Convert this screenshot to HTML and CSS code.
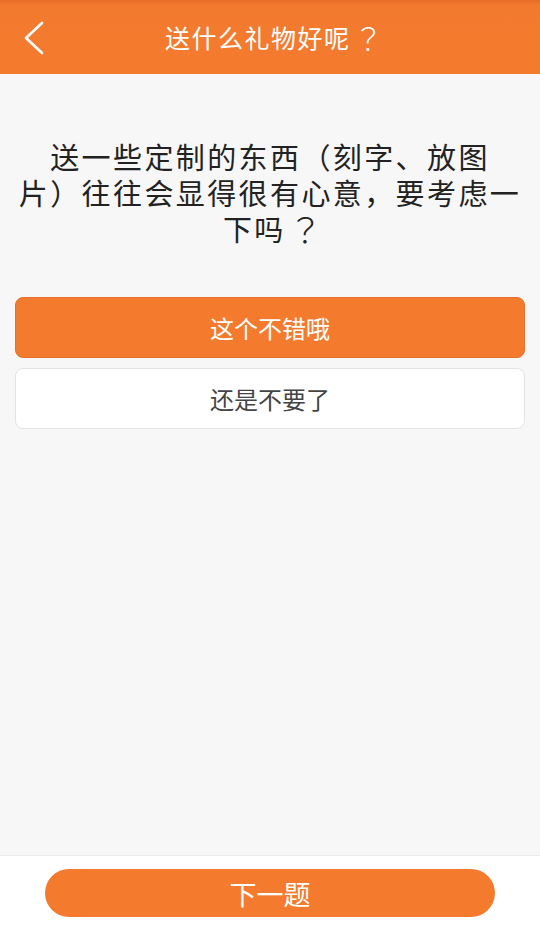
FILE: index.html
```html
<!DOCTYPE html>
<html lang="zh-CN">
<head>
<meta charset="utf-8">
<link rel="stylesheet" href="styles.css">
</head>
<body>
<div class="app">
  <header class="topbar">
    <span class="back">
      <svg width="22" height="34" viewBox="0 0 22 34"><path d="M19 2 L3 17 L19 32" fill="none" stroke="#fff" stroke-width="2.6" stroke-linecap="round" stroke-linejoin="round"/></svg>
    </span>
    <h1 class="title">送什么礼物好呢<span class="punct q">？</span></h1>
  </header>
  <main class="content">
    <p class="question">送一些定制的东西（刻字、放图<br>片<span class="punct">）</span>往往会显得很有心意<span class="punct">，</span>要考虑一<br>下吗<span class="punct q">？</span></p>
    <div class="options">
      <button class="opt opt-yes">这个不错哦</button>
      <button class="opt opt-no">还是不要了</button>
    </div>
  </main>
  <footer class="bottombar">
    <button class="next">下一题</button>
  </footer>
</div>
</body>
</html>
```
FILE: styles.css
```css
* { box-sizing: border-box; }
html, body { margin: 0; padding: 0; }
body {
  font-family: "Noto Sans CJK SC", "Noto Sans", sans-serif;
  background: #f7f7f7;
}
.app {
  width: 540px;
  height: 930px;
  display: flex;
  flex-direction: column;
}
.topbar {
  height: 74px;
  flex: none;
  background: linear-gradient(#e66d26 0px, #f27a2e 6px, #f47b2e 100%);
  position: relative;
  display: flex;
  align-items: center;
  justify-content: center;
}
.back {
  position: absolute;
  left: 23px;
  top: 21px;
  display: block;
  line-height: 0;
}
.title {
  margin: 0;
  font-size: 25px;
  font-weight: 400;
  color: #fff;
  letter-spacing: 1.5px;
  padding-left: 2px;
}
.punct {
  font-family: "Noto Sans CJK TC", "Noto Sans CJK SC", sans-serif;
}
.q {
  display: inline-block;
  font-weight: 300;
  transform: translateX(5px) scale(1.18);
}
.content {
  flex: 1;
  padding: 0 15px;
}
.question {
  margin: 64px -6px 0;
  text-align: center;
  font-size: 29px;
  line-height: 36px;
  letter-spacing: 2.4px;
  color: #222;
  white-space: nowrap;
}
.options {
  margin-top: 51px;
  display: flex;
  flex-direction: column;
  gap: 10px;
}
.opt {
  height: 61px;
  border-radius: 8px;
  font-family: inherit;
  font-size: 24px;
  width: 100%;
  padding: 0;
}
.opt-yes {
  background: #f47b2e;
  border: 1px solid #e8702a;
  color: #fff;
}
.opt-no {
  background: #fff;
  border: 1px solid #e3e3e3;
  color: #444;
}
.bottombar {
  height: 75px;
  flex: none;
  background: #fff;
  border-top: 1px solid #ececec;
  display: flex;
  justify-content: center;
  padding-top: 13px;
}
.next {
  width: 450px;
  height: 48px;
  border: none;
  border-radius: 24px;
  background: #f47b2e;
  color: #fff;
  font-family: inherit;
  font-size: 27px;
  padding: 0;
}
```
